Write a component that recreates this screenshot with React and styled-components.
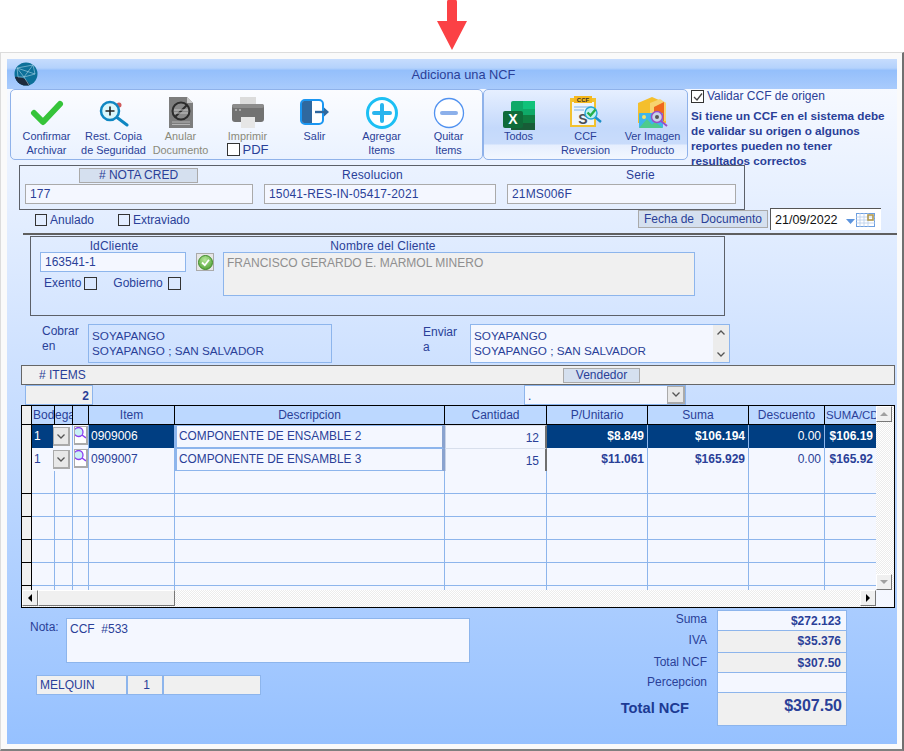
import React from 'react'
import styled, { createGlobalStyle } from 'styled-components'

const TEXT = '#2a3f98'
const LINE = '#8db5ec'
const FIELD = '#f4f7ff'
const GREY = '#f0f0f0'
const CHIP = '#d5e0ef'
const NAVY = '#003e82'
const COLS = '10px 23px 18px 16px 86px 270px 102px 101px 101px 76px 51px'

const GlobalStyle = createGlobalStyle`
  html, body {
    margin: 0;
    background: #fff;
  }
  body {
    font-family: "Liberation Sans", Arial, sans-serif;
    font-size: 12px;
    color: ${TEXT};
  }
`

const Page = styled.div`
  width: 904px;
  height: 751px;
  overflow: hidden;
`
const ArrowZone = styled.div`
  height: 52px;
  padding-left: 437px;
  box-sizing: border-box;
`
const Window = styled.div`
  width: 904px;
  height: 699px;
  box-sizing: border-box;
  padding: 6px 5px 5px 6px;
  background: #fafafa;
  border-top: 1px solid #dcdcdc;
  border-left: 1px solid #dcdcdc;
  border-right: 2px solid #707070;
  border-bottom: 2px solid #808080;
`
const Client = styled.div`
  width: 890px;
  height: 685px;
  background: linear-gradient(180deg, #f6f9ff 30px, #d3e4ff 270px, #96c1ff 100%);
`
const TitleBar = styled.div`
  height: 30px;
  display: flex;
  align-items: center;
  padding-left: 7px;
  background: linear-gradient(180deg, #c6dcfd 0%, #b4d2fc 30%, #94bffb 38%, #a9cbfc 100%);
`
const TitleText = styled.div`
  width: 851px;
  text-align: center;
  font-size: 12.8px;
`
const TopRow = styled.div`
  display: flex;
  height: 71px;
  padding-left: 3px;
  margin-bottom: 5px;
`
const ToolGroup = styled.div`
  display: flex;
  box-sizing: border-box;
  height: 71px;
  padding-left: ${p => p.$pad}px;
  width: ${p => p.$w}px;
  border: 1px solid #8fb2ea;
  border-radius: 5px;
  background: ${p => p.$blue
    ? 'linear-gradient(180deg, #e6efff 0%, #c4d9fb 55%, #c9dcfb 78%, #e6effe 80%, #f2f7ff 100%)'
    : 'linear-gradient(180deg, #fbfcff 0%, #eaf2ff 100%)'};
`
const ToolButton = styled.div`
  width: 67px;
  flex: none;
  display: flex;
  flex-direction: column;
  align-items: center;
  color: ${p => (p.$off ? '#8a8a7a' : TEXT)};
  font-size: 10.9px;
  line-height: 14px;
  white-space: nowrap;
`
const ToolIcon = styled.div`
  height: 39px;
  width: 67px;
  flex: none;
  display: flex;
  justify-content: center;
`
const PdfRow = styled.div`
  display: flex;
  align-items: center;
  gap: 3px;
  font-size: 13px;
  color: ${TEXT};
  height: 13px;
`
const Box = styled.span`
  display: inline-block;
  flex: none;
  width: ${p => p.$s || 12}px;
  height: ${p => p.$s || 12}px;
  box-sizing: border-box;
  border: 1px solid #333;
  background: ${p => (p.$clear ? 'transparent' : '#fff')};
  position: relative;
`
const SidePanel = styled.div`
  margin-left: 3px;
  width: 199px;
`
const CheckLabel = styled.label`
  display: inline-flex;
  align-items: center;
  gap: ${p => p.$gap || 3}px;
  white-space: nowrap;
`
const Warning = styled.div`
  margin-top: 2px;
  font-weight: bold;
  line-height: 15px;
  font-size: 11.7px;
`
const HeadBox = styled.div`
  margin-left: 12px;
  width: 726px;
  height: 45px;
  box-sizing: border-box;
  border: 1px solid #5c6068;
  padding: 2px 8px 0 5px;
  display: grid;
  grid-template-columns: 228px 232px 229px;
  column-gap: 11px;
  grid-template-rows: 16px 20px;
`
const ColLabel = styled.div`
  text-align: center;
  line-height: 14px;
  height: 13px;
  letter-spacing: 0.15px;
  padding-left: ${p => p.$pl || 0}px;
  padding-right: ${p => p.$pr || 0}px;
  width: ${p => (p.$w ? `${p.$w}px` : 'auto')};
`
const Chip = styled.div`
  box-sizing: border-box;
  border: 1px solid #aaa;
  background: ${CHIP};
  text-align: center;
  line-height: ${p => p.$lh || 13}px;
  width: ${p => p.$w}px;
  height: ${p => p.$h || 15}px;
  margin-left: ${p => p.$ml || 0}px;
  white-space: pre;
  flex: none;
`
const FlatField = styled.div`
  box-sizing: border-box;
  height: 20px;
  border: 1px solid #aaa;
  background: ${FIELD};
  padding-left: 4px;
  line-height: 19px;
  letter-spacing: 0.15px;
`
const CheckRow = styled.div`
  height: 23px;
  display: flex;
  align-items: flex-start;
  padding-left: 28px;
`
const CheckSlot = styled.div`
  width: 83px;
  padding-top: 3px;
  flex: none;
`
const DateBox = styled.div`
  margin: -2px 0 0 2px;
  width: 111px;
  height: 22px;
  flex: none;
  box-sizing: border-box;
  border-top: 1px solid #555;
  border-left: 1px solid #555;
  background: #fff;
  color: #111;
  font-size: 12.5px;
  padding: 4px 0 0 4px;
  display: flex;
  gap: 4px;
`
const Rule = styled.div`
  margin-left: 16px;
  height: 2px;
  background: #5f5f5f;
  margin-bottom: 1px;
`
const ClientBox = styled.div`
  margin-left: 23px;
  width: 695px;
  height: 80px;
  box-sizing: border-box;
  border: 1px solid #5c6068;
  padding-top: 2px;
  padding-left: 9px;
  display: flex;
`
const IdCol = styled.div`
  width: 146px;
  flex: none;
`
const IdField = styled.div`
  box-sizing: border-box;
  height: 20px;
  border: 1px solid ${LINE};
  background: ${FIELD};
  line-height: 19px;
  padding-left: 4px;
`
const TaxRow = styled.div`
  display: flex;
  padding: 4px 0 0 4px;
  gap: 16px;
`
const StatusButton = styled.div`
  width: 18px;
  height: 18px;
  box-sizing: border-box;
  flex: none;
  margin: 14px 9px 0 10px;
  border: 1px solid #aaa;
  background: #e6e6e6;
  display: flex;
  align-items: center;
  justify-content: center;
`
const NameCol = styled.div`
  width: 472px;
  flex: none;
`
const NameField = styled.div`
  box-sizing: border-box;
  height: 44px;
  border: 1px solid ${LINE};
  background: ${GREY};
  color: #8f8f8f;
  padding: 3px 3px 0;
  line-height: 14px;
`
const AddressRow = styled.div`
  display: flex;
  height: 39px;
  margin-top: 8px;
  margin-bottom: 2px;
  padding-left: 35px;
`
const AddressLabel = styled.div`
  width: ${p => p.$w}px;
  margin-left: ${p => p.$ml || 0}px;
  flex: none;
  line-height: 15px;
  white-space: pre-line;
  padding-top: ${p => p.$top || 0}px;
`
const AddressBox = styled.div`
  box-sizing: border-box;
  width: ${p => p.$w}px;
  flex: none;
  border: 1px solid ${LINE};
  background: ${p => (p.$solid ? FIELD : 'transparent')};
  padding: 3px 3px 0;
  font-size: 11.7px;
  line-height: 15px;
  display: flex;
  justify-content: space-between;
  white-space: pre-line;
`
const AddressScroll = styled.div`
  width: 16px;
  margin: -3px -3px 0 0;
  background: #ececec;
  display: flex;
  flex-direction: column;
  justify-content: space-between;
  align-items: center;
  padding: 5px 0;
`
const ItemsBar = styled.div`
  margin-left: 14px;
  width: 874px;
  height: 20px;
  box-sizing: border-box;
  background: ${GREY};
  border: 1px solid #666;
  display: flex;
  align-items: center;
  padding-left: 17px;
`
const ItemsLabel = styled.div`
  width: 524px;
  flex: none;
`
const SellerRow = styled.div`
  display: flex;
  height: 20px;
  padding-left: 18px;
`
const CountField = styled.div`
  box-sizing: border-box;
  width: 68px;
  height: 20px;
  border: 1px solid ${LINE};
  background: ${GREY};
  text-align: right;
  font-weight: bold;
  line-height: 20px;
  padding-right: 3px;
`
const SellerSelect = styled.div`
  box-sizing: border-box;
  margin-left: 431px;
  width: 162px;
  height: 20px;
  border: 1px solid ${LINE};
  background: ${FIELD};
  padding-left: 3px;
  line-height: 21px;
  display: flex;
  justify-content: space-between;
`
const ComboArrow = styled.div`
  width: ${p => p.$w || 18}px;
  height: ${p => p.$h || 18}px;
  flex: none;
  box-sizing: border-box;
  background: #e8e8e8;
  border: 1px solid #aaa;
  border-right-width: 2px;
  border-bottom-width: 2px;
  display: flex;
  align-items: center;
  justify-content: center;
`
const GridFrame = styled.div`
  margin-left: 14px;
  width: 874px;
  height: 203px;
  box-sizing: border-box;
  border: 1px solid #000;
  background: ${FIELD};
`
const GridBody = styled.div`
  display: flex;
  height: 184px;
`
const GridRows = styled.div`
  width: 854px;
  height: 184px;
  flex: none;
  overflow: hidden;
`
const GridRow = styled.div`
  display: grid;
  grid-template-columns: ${COLS};
  height: ${p => p.$h}px;
`
const HeadCell = styled.div`
  box-sizing: border-box;
  background: #bcd8ff;
  border-right: 1px solid #000;
  border-bottom: 1px solid #000;
  text-align: ${p => (p.$left ? 'left' : 'center')};
  padding-left: ${p => p.$pad || 0}px;
  font-size: ${p => p.$size || 12}px;
  line-height: 18px;
  overflow: hidden;
  white-space: nowrap;
  &:last-child { border-right: 0; }
`
const RowHead = styled.div`
  box-sizing: border-box;
  background: ${GREY};
  border-right: 1px solid #000;
  border-bottom: 1px solid #000;
`
const Cell = styled.div`
  box-sizing: border-box;
  border-right: 1px solid ${LINE};
  border-bottom: 1px solid ${LINE};
  background: ${p => (p.$sel ? NAVY : FIELD)};
  color: ${p => (p.$sel ? '#fff' : TEXT)};
  font-weight: ${p => (p.$bold ? 'bold' : 'normal')};
  text-align: ${p => (p.$right ? 'right' : 'left')};
  padding: 0 3px 0 2px;
  line-height: 23px;
  white-space: nowrap;
  overflow: hidden;
  &:last-child { border-right: 0; }
`
const EditCell = styled.div`
  box-sizing: border-box;
  background: ${FIELD};
  border: 1px solid ${LINE};
  border-left-width: 2px;
  border-bottom-width: 3px;
  border-right: 3px solid #8aa3cf;
  padding: 0 2px;
  font-size: 11.85px;
  line-height: 20px;
  white-space: nowrap;
`
const QtyCell = styled.div`
  box-sizing: border-box;
  background: ${FIELD};
  border-top: 1px solid #d8dfec;
  border-left: 1px solid #c9d3e6;
  border-right: 2px solid #6f6f6f;
  border-bottom: 2px solid #6f6f6f;
  text-align: right;
  padding: 3px 6px 0 0;
  line-height: 19px;
`
const ComboCell = styled.div`
  box-sizing: border-box;
  background: ${FIELD};
  border-right: 1px solid ${LINE};
  border-bottom: 2px solid ${LINE};
  padding-top: 2px;
  margin-left: -2px;
`
const LookCell = styled.div`
  box-sizing: border-box;
  background: ${FIELD};
  border-right: 1px solid ${LINE};
  border-bottom: 2px solid ${LINE};
  padding: 1px;
`
const LookButton = styled.div`
  box-sizing: border-box;
  width: 14px;
  height: 19px;
  background: #fff;
  border: 1px solid #aaa;
  border-right-width: 2px;
  border-bottom-width: 2px;
  overflow: hidden;
`
const VScroll = styled.div`
  width: 18px;
  flex: none;
  background: conic-gradient(#ececec 25%, #fff 0 50%, #ececec 0 75%, #fff 0) 0 0 / 2px 2px;
  display: flex;
  flex-direction: column;
  justify-content: space-between;
`
const ScrollButton = styled.div`
  width: 16px;
  height: 16px;
  flex: none;
  box-sizing: border-box;
  background: ${GREY};
  border-top: 1px solid #fff;
  border-left: 1px solid #fff;
  border-right: 1px solid #777;
  border-bottom: 1px solid #777;
  display: flex;
  align-items: center;
  justify-content: center;
`
const Triangle = styled.div`
  width: 0;
  height: 0;
  border-style: solid;
  border-color: transparent;
  ${p => p.$dir === 'up' && 'border-width: 0 4px 4px; border-bottom-color: #a0a0a0;'}
  ${p => p.$dir === 'down' && 'border-width: 4px 4px 0; border-top-color: #a0a0a0;'}
  ${p => p.$dir === 'left' && 'border-width: 4px 4px 4px 0; border-right-color: #000;'}
  ${p => p.$dir === 'right' && 'border-width: 4px 0 4px 4px; border-left-color: #000;'}
`
const HScroll = styled.div`
  display: flex;
  height: 17px;
`
const HTrack = styled.div`
  width: 854px;
  flex: none;
  display: flex;
  background: conic-gradient(#ececec 25%, #fff 0 50%, #ececec 0 75%, #fff 0) 0 0 / 2px 2px;
`
const Thumb = styled.div`
  width: 137px;
  height: 16px;
  margin-right: auto;
  box-sizing: border-box;
  background: ${GREY};
  border-top: 1px solid #fff;
  border-left: 1px solid #fff;
  border-right: 1px solid #777;
  border-bottom: 1px solid #777;
`
const Footer = styled.div`
  display: flex;
  margin-top: 2px;
`
const FooterLeft = styled.div`
  width: 470px;
  flex: none;
  padding-top: 8px;
`
const NoteRow = styled.div`
  display: flex;
  padding-left: 23px;
`
const NoteLabel = styled.div`
  width: 36px;
  flex: none;
  padding-top: 2px;
  line-height: 15px;
`
const NoteField = styled.div`
  box-sizing: border-box;
  width: 404px;
  height: 45px;
  border: 1px solid ${LINE};
  background: ${FIELD};
  padding: 3px;
  line-height: 15px;
  white-space: pre;
`
const UserRow = styled.div`
  display: flex;
  margin: 12px 0 0 29px;
`
const UserCell = styled.div`
  box-sizing: border-box;
  width: ${p => p.$w}px;
  height: 20px;
  flex: none;
  border: 1px solid ${LINE};
  background: ${GREY};
  text-align: ${p => (p.$center ? 'center' : 'left')};
  padding-left: 3px;
  line-height: 19px;
`
const TotalLine = styled.div`
  display: flex;
  height: ${p => p.$h}px;
`
const TotalLabel = styled.div`
  box-sizing: border-box;
  width: 230px;
  flex: none;
  text-align: right;
  font-weight: ${p => (p.$big ? 'bold' : 'normal')};
  font-size: ${p => (p.$big ? 14.7 : 12)}px;
  color: ${p => (p.$big ? '#1c3a94' : TEXT)};
  padding-right: ${p => (p.$big ? 18 : 0)}px;
  padding-top: ${p => (p.$big ? 4 : 0)}px;
  line-height: ${p => (p.$big ? 22 : 18)}px;
`
const TotalValue = styled.div`
  box-sizing: border-box;
  width: 130px;
  flex: none;
  margin-left: 10px;
  border: 1px solid ${LINE};
  border-top-width: ${p => (p.$first ? 1 : 0)}px;
  background: ${p => (p.$grey ? GREY : FIELD)};
  text-align: right;
  font-weight: bold;
  font-size: ${p => (p.$big ? 16 : 12)}px;
  padding-right: ${p => (p.$big ? 4 : 5)}px;
  line-height: ${p => (p.$big ? 26 : 20)}px;
`

const RedArrow = () => (
  <svg width="30" height="50" viewBox="0 0 30 50">
    <path d="M11 0 H19 Q20 0 20 2 V21 H30 L15 50 L0 21 H10 V2 Q10 0 11 0 Z" fill="#fb4145" />
  </svg>
)

const Logo = () => (
  <svg width="24" height="24" viewBox="0 0 24 24">
    <defs>
      <clipPath id="globe"><circle cx="12" cy="12" r="11.5" /></clipPath>
    </defs>
    <g clipPath="url(#globe)">
      <rect width="24" height="24" fill="#0c7099" />
      <path d="M0 24 V15 Q8 14 13 19 L17 24 Z" fill="#1e2a3c" />
      <path d="M3 6 L19 3 L21 12 L10 15 Z M3 6 L21 12 M19 3 L10 15 M3 6 L4 15 L10 15 L15 23" fill="none" stroke="#a8d4e6" strokeWidth="0.6" />
    </g>
  </svg>
)

const ConfirmIcon = () => (
  <svg width="34" height="26" viewBox="0 0 34 26" style={{ marginTop: 10 }}>
    <path d="M4 13 L13 22 L30 4" fill="none" stroke="#36c43a" strokeWidth="6" strokeLinecap="round" strokeLinejoin="round" />
  </svg>
)

const RestoreIcon = () => (
  <svg width="30" height="28" viewBox="0 0 30 28" style={{ marginTop: 10 }}>
    <path d="M16 16 L28 25" stroke="#0e86c2" strokeWidth="3" strokeLinecap="round" />
    <circle cx="20" cy="5" r="2.5" fill="#d05a5a" />
    <circle cx="11" cy="11" r="9" fill="#d8f6fb" stroke="#0e86c2" strokeWidth="2.5" />
    <path d="M6.5 11 H15.5 M11 6.5 V15.5" stroke="#222" strokeWidth="1.6" />
  </svg>
)

const VoidIcon = () => (
  <svg width="24" height="31" viewBox="0 0 24 31" style={{ marginTop: 7 }}>
    <path d="M0 0 H18 L24 6 V31 H0 Z" fill="#7d7d7d" />
    <path d="M18 0 L24 6 H18 Z" fill="#c8c8c8" />
    <path d="M3 25 H21 M3 27.5 H21" stroke="#b5b5b5" strokeWidth="1" />
    <circle cx="12" cy="14" r="8.5" fill="#8a8a8a" stroke="#2d2d2d" strokeWidth="2" />
    <path d="M6 20 L18 8" stroke="#2d2d2d" strokeWidth="2" />
    <path d="M5 13 H19 M5 16 H19" stroke="#c4c4c4" strokeWidth="1" />
  </svg>
)

const PrintIcon = () => (
  <svg width="32" height="31" viewBox="0 0 32 31" style={{ marginTop: 7 }}>
    <rect x="8" y="0" width="16" height="9" fill="#dcdcdc" />
    <rect x="0" y="7" width="32" height="18" rx="3" fill="#727272" />
    <rect x="0" y="7" width="32" height="4" rx="2" fill="#8c8c8c" />
    <circle cx="4" cy="13" r="1" fill="#bbb" />
    <circle cx="8" cy="13" r="1" fill="#bbb" />
    <rect x="9" y="20" width="14" height="11" fill="#e6e6e6" />
  </svg>
)

const ExitIcon = () => (
  <svg width="30" height="26" viewBox="0 0 30 26" style={{ marginTop: 9 }}>
    <rect x="1" y="1" width="22" height="24" rx="4" fill="#fff" stroke="#1a96f2" strokeWidth="2" />
    <path d="M2 4 Q2 2 4 2 H12 V24 H4 Q2 24 2 22 Z" fill="#2f689f" />
    <path d="M15 13 H25" stroke="#2f689f" strokeWidth="2.4" />
    <path d="M24 8.5 L29 13 L24 17.5 Z" fill="#2f689f" />
  </svg>
)

const AddIcon = () => (
  <svg width="32" height="32" viewBox="0 0 32 32" style={{ marginTop: 7 }}>
    <circle cx="16" cy="16" r="14.5" fill="#fff" stroke="#1cbff4" strokeWidth="3" />
    <path d="M16 8 V24 M8 16 H24" stroke="#2ab5ee" strokeWidth="4" strokeLinecap="round" />
  </svg>
)

const RemoveIcon = () => (
  <svg width="32" height="32" viewBox="0 0 32 32" style={{ marginTop: 7 }}>
    <circle cx="16" cy="16" r="14.5" fill="#fff" stroke="#5192f0" strokeWidth="1.3" />
    <path d="M9 16 H23" stroke="#8cb0ea" strokeWidth="4" strokeLinecap="round" />
  </svg>
)

const ExcelIcon = () => (
  <svg width="32" height="30" viewBox="0 0 32 30" style={{ marginTop: 11 }}>
    <rect x="8" y="0" width="24" height="29" rx="2" fill="#0fa968" />
    <rect x="20" y="0" width="12" height="8" fill="#10c27a" />
    <rect x="20" y="14" width="12" height="8" fill="#107c41" />
    <rect x="8" y="14" width="12" height="8" fill="#185c37" />
    <rect x="8" y="22" width="24" height="7" fill="#185c37" />
    <rect x="0" y="10" width="20" height="17" rx="2" fill="#0f6b3a" />
    <text x="10" y="23" fontFamily="Liberation Sans" fontWeight="bold" fontSize="14" fill="#fff" textAnchor="middle">X</text>
  </svg>
)

const ReversalIcon = () => (
  <svg width="32" height="31" viewBox="0 0 32 31" style={{ marginTop: 6 }}>
    <rect x="0" y="2" width="26" height="29" fill="#f2c12e" />
    <rect x="2" y="6" width="22" height="23" fill="#eef4fb" />
    <rect x="4" y="0" width="18" height="7" fill="#f5b81f" />
    <text x="13" y="6" fontFamily="Liberation Sans" fontWeight="bold" fontSize="6" fill="#33302a" textAnchor="middle">CCF</text>
    <path d="M4 11 H22 M4 14 H14" stroke="#7fb2e6" strokeWidth="1" />
    <text x="13" y="28" fontFamily="Liberation Sans" fontWeight="bold" fontSize="14" fill="#4a4f57" textAnchor="middle">S</text>
    <path d="M25 21 L31 26" stroke="#1b8fc9" strokeWidth="2.4" />
    <circle cx="21" cy="17" r="6" fill="#bdf0f2" stroke="#25a6d6" strokeWidth="1.4" />
    <path d="M17.5 16.5 L20.5 19.5 L25.5 13.5" fill="none" stroke="#23b04b" strokeWidth="2.4" />
  </svg>
)

const ImageIcon = () => (
  <svg width="30" height="31" viewBox="0 0 30 31" style={{ marginTop: 7 }}>
    <path d="M0 6 L14 0 L28 6 V26 H0 Z" fill="#f4bf2d" />
    <path d="M12 6 L22 2 L28 6 V24 H12 Z" fill="#f7d36f" />
    <path d="M16 10 L26 5 V24 H16 Z" fill="#f0671c" />
    <rect x="1" y="16" width="24" height="15" rx="1" fill="#3fb6ea" />
    <path d="M1 31 L9 22 L17 31 Z M10 31 L17 25 L25 31 Z" fill="#4ecb8d" />
    <circle cx="6" cy="20" r="2" fill="#f5e26a" />
    <path d="M23 24 L29 29" stroke="#9a4fc8" strokeWidth="2" />
    <circle cx="19" cy="20" r="5.5" fill="#c9d4e8" stroke="#9a4fc8" strokeWidth="1.5" />
    <circle cx="19" cy="20" r="2" fill="#555" />
  </svg>
)

const DateIcon = () => (
  <svg width="32" height="15" viewBox="0 0 32 15" style={{ marginLeft: 4 }}>
    <path d="M0 6 H9 L4.5 11 Z" fill="#5c94dd" />
    <rect x="10.5" y="0.5" width="18" height="13" fill="#fff" stroke="#6d9fe0" />
    <path d="M10 4 H29 M10 7 H29 M10 10 H29 M14 0 V14 M18 0 V14 M22 0 V14" stroke="#b8cdea" strokeWidth="0.8" />
    <rect x="22" y="2" width="5" height="5" fill="none" stroke="#b59a4d" strokeWidth="1.6" />
  </svg>
)

const OkIcon = () => (
  <svg width="15" height="15" viewBox="0 0 15 15">
    <defs>
      <radialGradient id="okBall" cx="0.45" cy="0.3" r="0.8">
        <stop offset="0" stopColor="#b5e89a" />
        <stop offset="1" stopColor="#4a9c2e" />
      </radialGradient>
    </defs>
    <circle cx="7.5" cy="7.5" r="7" fill="url(#okBall)" stroke="#3f8a2a" />
    <path d="M4 7.5 L6.8 10.2 L11 4.8" fill="none" stroke="#fff" strokeWidth="1.8" />
  </svg>
)

const Chevron = ({ up, color = '#555' }) => (
  <svg width="8" height="5" viewBox="0 0 8 5">
    <path d={up ? 'M0.5 4.5 L4 1 L7.5 4.5' : 'M0.5 0.5 L4 4 L7.5 0.5'} fill="none" stroke={color} strokeWidth="1.3" />
  </svg>
)

const Tick = () => (
  <svg width="12" height="12" viewBox="0 0 12 12" style={{ position: 'absolute', left: 0, top: 0 }}>
    <path d="M2 6 L5 9 L10 2.5" fill="none" stroke="#444" strokeWidth="1.3" />
  </svg>
)

const LookGlyph = () => (
  <svg width="11" height="14" viewBox="0 0 11 14">
    <circle cx="3.5" cy="5" r="4.5" fill="#c9f0f6" stroke="#8a3ff0" strokeWidth="1.3" />
    <path d="M7 8 L11 11" stroke="#8a3ff0" strokeWidth="1.5" />
  </svg>
)

const tools = [
  { icon: <ConfirmIcon />, lines: ['Confirmar', 'Archivar'] },
  { icon: <RestoreIcon />, lines: ['Rest. Copia', 'de Seguridad'] },
  { icon: <VoidIcon />, lines: ['Anular', 'Documento'], off: true },
  { icon: <PrintIcon />, lines: ['Imprimir'], off: true, pdf: true },
  { icon: <ExitIcon />, lines: ['Salir'] },
  { icon: <AddIcon />, lines: ['Agregar', 'Items'] },
  { icon: <RemoveIcon />, lines: ['Quitar', 'Items'] },
]
const reports = [
  { icon: <ExcelIcon />, lines: ['Todos'] },
  { icon: <ReversalIcon />, lines: ['CCF', 'Reversion'] },
  { icon: <ImageIcon />, lines: ['Ver Imagen', 'Producto'] },
]
const items = [
  { bod: '1', code: '0909006', name: 'COMPONENTE DE ENSAMBLE 2', qty: '12', price: '$8.849', sum: '$106.194', off: '0.00', total: '$106.19', sel: true },
  { bod: '1', code: '0909007', name: 'COMPONENTE DE ENSAMBLE 3', qty: '15', price: '$11.061', sum: '$165.929', off: '0.00', total: '$165.92' },
]
const blankRows = [1, 2, 3, 4, 5, 6]
const totals = [
  { label: 'Suma', value: '$272.123', h: 21, first: true },
  { label: 'IVA', value: '$35.376', h: 22, grey: true },
  { label: 'Total NCF', value: '$307.50', h: 20, grey: true },
  { label: 'Percepcion', value: '', h: 20 },
  { label: 'Total NCF', value: '$307.50', h: 33, grey: true, big: true },
]

function Tool({ tool }) {
  return (
    <ToolButton $off={tool.off}>
      <ToolIcon>{tool.icon}</ToolIcon>
      {tool.lines.map(line => <div key={line}>{line}</div>)}
      {tool.pdf && <PdfRow><Box $s={13} />PDF</PdfRow>}
    </ToolButton>
  )
}

export default function App() {
  return (
    <Page>
      <GlobalStyle />
      <ArrowZone><RedArrow /></ArrowZone>
      <Window>
        <Client>
          <TitleBar>
            <Logo />
            <TitleText>Adiciona una NCF</TitleText>
          </TitleBar>
          <TopRow>
            <ToolGroup $w={473} $pad={2}>
              {tools.map(t => <Tool key={t.lines[0]} tool={t} />)}
            </ToolGroup>
            <ToolGroup $w={205} $pad={1} $blue>
              {reports.map(t => <Tool key={t.lines[0]} tool={t} />)}
            </ToolGroup>
            <SidePanel>
              <CheckLabel><Box $s={13}><Tick /></Box>Validar CCF de origen</CheckLabel>
              <Warning>
                Si tiene un CCF en el sistema debe<br />
                de validar su origen o algunos<br />
                reportes pueden no tener<br />
                resultados correctos
              </Warning>
            </SidePanel>
          </TopRow>
          <HeadBox>
            <Chip $w={119} $ml={54}># NOTA CRED</Chip>
            <ColLabel $pr={15}>Resolucion</ColLabel>
            <ColLabel $pl={38}>Serie</ColLabel>
            <FlatField>177</FlatField>
            <FlatField>15041-RES-IN-05417-2021</FlatField>
            <FlatField>21MS006F</FlatField>
          </HeadBox>
          <CheckRow>
            <CheckSlot><CheckLabel><Box $clear />Anulado</CheckLabel></CheckSlot>
            <CheckSlot><CheckLabel><Box $clear />Extraviado</CheckLabel></CheckSlot>
            <Chip $w={130} $h={18} $lh={16} $ml={437}>Fecha de  Documento</Chip>
            <DateBox>21/09/2022<DateIcon /></DateBox>
          </CheckRow>
          <Rule />
          <ClientBox>
            <IdCol>
              <ColLabel $pl={2}>IdCliente</ColLabel>
              <IdField>163541-1</IdField>
              <TaxRow>
                <CheckLabel $gap={3}>Exento<Box $s={13} $clear /></CheckLabel>
                <CheckLabel $gap={5}>Gobierno<Box $s={13} $clear /></CheckLabel>
              </TaxRow>
            </IdCol>
            <StatusButton><OkIcon /></StatusButton>
            <NameCol>
              <ColLabel $w={320}>Nombre del Cliente</ColLabel>
              <NameField>FRANCISCO GERARDO E. MARMOL MINERO</NameField>
            </NameCol>
          </ClientBox>
          <AddressRow>
            <AddressLabel $w={46}>{'Cobrar\nen'}</AddressLabel>
            <AddressBox $w={244}>{'SOYAPANGO\nSOYAPANGO ; SAN SALVADOR'}</AddressBox>
            <AddressLabel $w={47} $top={1} $ml={91}>{'Enviar\na'}</AddressLabel>
            <AddressBox $w={260} $solid>
              <div>{'SOYAPANGO\nSOYAPANGO ; SAN SALVADOR'}</div>
              <AddressScroll><Chevron up /><Chevron /></AddressScroll>
            </AddressBox>
          </AddressRow>
          <ItemsBar>
            <ItemsLabel># ITEMS</ItemsLabel>
            <Chip $w={77} $lh={13}>Vendedor</Chip>
          </ItemsBar>
          <SellerRow>
            <CountField>2</CountField>
            <SellerSelect>.<ComboArrow><Chevron /></ComboArrow></SellerSelect>
          </SellerRow>
          <GridFrame>
            <GridBody>
              <GridRows>
                <GridRow $h={19}>
                  <RowHead />
                  <HeadCell $left $pad={1}>Bod</HeadCell>
                  <HeadCell $left>ega</HeadCell>
                  <HeadCell />
                  <HeadCell>Item</HeadCell>
                  <HeadCell>Descripcion</HeadCell>
                  <HeadCell>Cantidad</HeadCell>
                  <HeadCell>P/Unitario</HeadCell>
                  <HeadCell>Suma</HeadCell>
                  <HeadCell>Descuento</HeadCell>
                  <HeadCell $left $pad={1} $size={11.4}>SUMA/CD</HeadCell>
                </GridRow>
                {items.map(item => (
                  <GridRow key={item.code} $h={23}>
                    <RowHead />
                    <Cell $sel={item.sel}>{item.bod}</Cell>
                    <ComboCell><ComboArrow $w={17} $h={19}><Chevron /></ComboArrow></ComboCell>
                    <LookCell><LookButton><LookGlyph /></LookButton></LookCell>
                    <Cell $sel={item.sel}>{item.code}</Cell>
                    <EditCell>{item.name}</EditCell>
                    <QtyCell>{item.qty}</QtyCell>
                    <Cell $sel={item.sel} $right $bold>{item.price}</Cell>
                    <Cell $sel={item.sel} $right $bold>{item.sum}</Cell>
                    <Cell $sel={item.sel} $right>{item.off}</Cell>
                    <Cell $sel={item.sel} $right $bold>{item.total}</Cell>
                  </GridRow>
                ))}
                {blankRows.map(n => (
                  <GridRow key={n} $h={23}>
                    <RowHead />
                    <Cell /><Cell /><Cell /><Cell /><Cell /><Cell /><Cell /><Cell /><Cell /><Cell />
                  </GridRow>
                ))}
              </GridRows>
              <VScroll>
                <ScrollButton><Triangle $dir="up" /></ScrollButton>
                <ScrollButton><Triangle $dir="down" /></ScrollButton>
              </VScroll>
            </GridBody>
            <HScroll>
              <HTrack>
                <ScrollButton><Triangle $dir="left" /></ScrollButton>
                <Thumb />
                <ScrollButton><Triangle $dir="right" /></ScrollButton>
              </HTrack>
            </HScroll>
          </GridFrame>
          <Footer>
            <FooterLeft>
              <NoteRow>
                <NoteLabel>Nota:</NoteLabel>
                <NoteField>CCF  #533</NoteField>
              </NoteRow>
              <UserRow>
                <UserCell $w={91}>MELQUIN</UserCell>
                <UserCell $w={36} $center>1</UserCell>
                <UserCell $w={98} />
              </UserRow>
            </FooterLeft>
            <div>
              {totals.map((t, i) => (
                <TotalLine key={i} $h={t.h}>
                  <TotalLabel $big={t.big}>{t.label}</TotalLabel>
                  <TotalValue $first={t.first} $grey={t.grey} $big={t.big}>{t.value}</TotalValue>
                </TotalLine>
              ))}
            </div>
          </Footer>
        </Client>
      </Window>
    </Page>
  )
}
